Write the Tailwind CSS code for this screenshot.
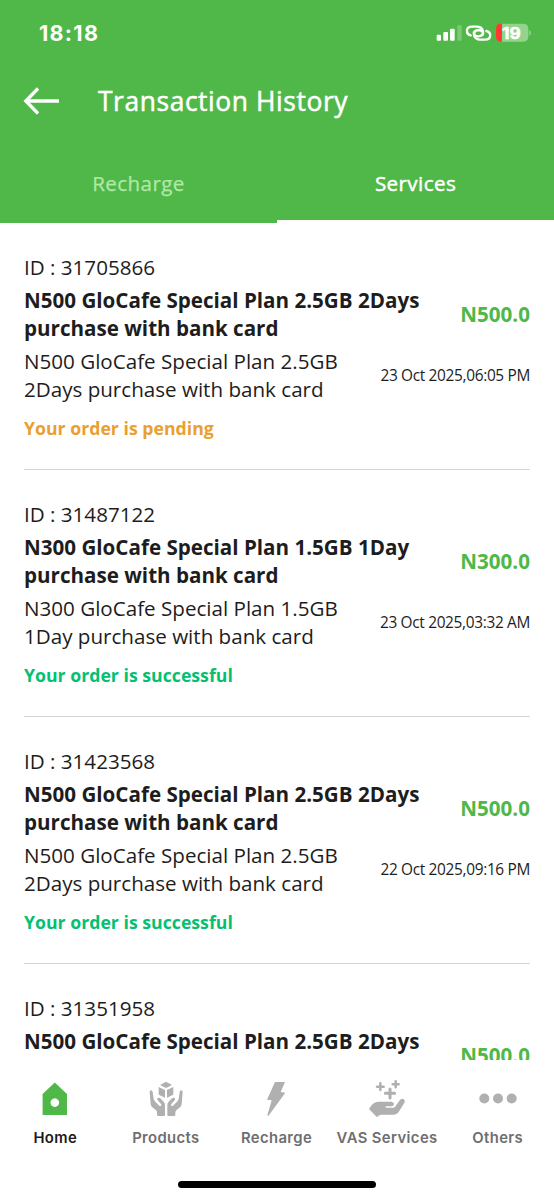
<!DOCTYPE html>
<html lang="en">
<head>
<meta charset="utf-8">
<title>Transaction History</title>
<script src="https://cdn.jsdelivr.net/npm/@tailwindcss/browser@4"></script>
</head>
<body class="bg-white">
<div class="w-[554px] h-[1200px] flex flex-col overflow-hidden bg-white font-['Open_Sans',sans-serif] text-[#1d1d1d]">
  <header class="h-[223px] shrink-0 bg-[#50b848] text-white flex flex-col">
    <div class="h-[66px] flex items-center justify-between pl-[39px] pr-[23px] font-['Inter',sans-serif]">
      <span class="text-[21.5px] font-bold leading-none tracking-[1.3px] pt-px">18:18</span>
      <svg class="w-[95px] h-[20px]" viewBox="48 40 285 60" fill="#fff">
        <rect x="50" y="75" width="13" height="18" rx="3"/>
        <rect x="70" y="67" width="14" height="26" rx="3"/>
        <rect x="90" y="57" width="14" height="36" rx="3"/>
        <rect x="112" y="47" width="13" height="46" rx="3" opacity=".25"/>
        <g fill="none" stroke="#fff" stroke-width="7" stroke-linecap="round">
          <path d="M152 77C137 73 136 51 156 51H170C191 51 198 78 176 80C162 80 158 68 166 64"/>
          <path d="M199 64C215 68 215 90 195 90H181C160 90 153 63 175 61C189 61 193 73 185 77"/>
        </g>
        <path d="M244 42H309Q325 42 325 58V80Q325 96 309 96H244Z" opacity=".38"/>
        <path d="M246 42H241Q228 42 228 58V80Q228 96 241 96H246Z" fill="#ff3b30"/>
        <path d="M328 62Q333 64 333 70T328 78Z" opacity=".4"/>
        <text x="274" y="87" text-anchor="middle" font-family="Inter" font-weight="700" font-size="46" stroke="#fff" stroke-width="1.5" textLength="56" lengthAdjust="spacingAndGlyphs">19</text>
      </svg>
    </div>
    <div class="h-[70px] flex items-center pl-[23px]">
      <svg class="w-[37px] h-[28px] mr-[38px]" viewBox="0 0 37 28" fill="none" stroke="#fff" stroke-width="3.3"><path d="M36 14H3M15 1.5L2.800 14L15 26.500"/></svg>
      <h1 class="text-[26.4px] leading-[35px] pt-px tracking-[0.58px] [-webkit-text-stroke:0.5px_#fff] whitespace-nowrap">Transaction History</h1>
    </div>
    <div class="flex-1 grid grid-cols-2 text-[20.6px] leading-[28px] tracking-[0.4px] text-center">
      <div class="pt-[33px] text-[#b1e8a6] [-webkit-text-stroke:0.25px_#b1e8a6]">Recharge</div>
      <div class="pt-[33px] [-webkit-text-stroke:0.45px_#fff] border-b-[3px] border-white">Services</div>
    </div>
  </header>

  <main class="h-[837px] shrink-0 overflow-hidden px-[24px] text-[20.6px] leading-[28px]">
    <article class="h-[247px] pt-[30px] flex flex-col border-b-[1.5px] border-[#d4d4d4]">
      <p>ID : 31705866</p>
      <div class="mt-[5px] flex justify-between items-center font-bold"><p>N500 GloCafe Special Plan 2.5GB 2Days<br>purchase with bank card</p><span class="text-[#50b848]">N500.0</span></div>
      <div class="mt-[5px] flex justify-between items-center"><p>N500 GloCafe Special Plan 2.5GB<br>2Days purchase with bank card</p><span class="pt-px text-[15.4px] tracking-[-0.32px]">23 Oct 2025,06:05 PM</span></div>
      <p class="mt-[13px] text-[17.7px] leading-[25px] font-bold text-[#eaa02f]">Your order is pending</p>
    </article>
    <article class="h-[247px] pt-[30px] flex flex-col border-b-[1.5px] border-[#d4d4d4]">
      <p>ID : 31487122</p>
      <div class="mt-[5px] flex justify-between items-center font-bold"><p>N300 GloCafe Special Plan 1.5GB 1Day<br>purchase with bank card</p><span class="text-[#50b848]">N300.0</span></div>
      <div class="mt-[5px] flex justify-between items-center"><p>N300 GloCafe Special Plan 1.5GB<br>1Day purchase with bank card</p><span class="pt-px text-[15.4px] tracking-[-0.32px]">23 Oct 2025,03:32 AM</span></div>
      <p class="mt-[13px] text-[17.7px] leading-[25px] font-bold text-[#05c072]">Your order is successful</p>
    </article>
    <article class="h-[247px] pt-[30px] flex flex-col border-b-[1.5px] border-[#d4d4d4]">
      <p>ID : 31423568</p>
      <div class="mt-[5px] flex justify-between items-center font-bold"><p>N500 GloCafe Special Plan 2.5GB 2Days<br>purchase with bank card</p><span class="text-[#50b848]">N500.0</span></div>
      <div class="mt-[5px] flex justify-between items-center"><p>N500 GloCafe Special Plan 2.5GB<br>2Days purchase with bank card</p><span class="pt-px text-[15.4px] tracking-[-0.32px]">22 Oct 2025,09:16 PM</span></div>
      <p class="mt-[13px] text-[17.7px] leading-[25px] font-bold text-[#05c072]">Your order is successful</p>
    </article>
    <article class="pt-[30px] flex flex-col">
      <p>ID : 31351958</p>
      <div class="mt-[5px] h-[56px] flex justify-between items-center font-bold"><p class="self-start">N500 GloCafe Special Plan 2.5GB 2Days</p><span class="text-[#50b848]">N500.0</span></div>
    </article>
  </main>

  <nav class="flex-1 flex flex-col items-center bg-white font-['Inter',sans-serif]">
    <div class="w-[553px] self-start grid grid-cols-5 pt-[20px] text-[14.8px] leading-[20px] font-semibold tracking-[0.4px] text-[#6e6e70] text-center whitespace-nowrap">
      <div class="flex flex-col items-center gap-[11px] text-[#1a1a1a]">
        <svg class="w-[40px] h-[37px]" viewBox="0 0 40 37" fill="#50b848"><path fill-rule="evenodd" d="M19.800 2.500L32 14V35H7.600V14ZM19.800 18.300a4.300 4.300 0 1 0 .01 0Z"/></svg>
        <span>Home</span>
      </div>
      <div class="flex flex-col items-center gap-[11px]">
        <svg class="w-[40px] h-[37px]" viewBox="46 30 120 111" fill="#b0b0b0">
          <path d="M106 35L124 45L106 54L88 45Z"/>
          <path d="M84 51L103 60V83L86 75Q84 74 84 71Z"/>
          <path d="M128 51L109 60V83L126 75Q128 74 128 71Z"/>
          <path id="hand" d="M57 66Q57 61 61 61Q65 61 66 66L69 87Q70 91 74 95L86 107Q89 109 91 107Q93 105 91 102L81 91Q78 87 81 84Q85 82 89 85L99 95Q103 99 103 105V134Q103 138 99 138H83Q79 138 79 134V127Q79 124 76 121L64 111Q61 108 60 103Z"/>
          <use href="#hand" transform="matrix(-1 0 0 1 213 0)"/>
        </svg>
        <span>Products</span>
      </div>
      <div class="flex flex-col items-center gap-[11px]">
        <svg class="w-[40px] h-[37px]" viewBox="48 30 120 111" fill="#b0b0b0"><path d="M105 36H135L122 66L136 68L85 138L82 136L95 91L81 89Z"/></svg>
        <span>Recharge</span>
      </div>
      <div class="flex flex-col items-center gap-[11px]">
        <svg class="w-[40px] h-[37px]" viewBox="52 30 120 111" fill="#b0b0b0">
          <path fill="none" stroke="#b0b0b0" stroke-width="7.5" stroke-linecap="round" d="M82 50H102M92 40V60M129 43H147M138 34V52"/>
          <path fill="none" stroke="#b0b0b0" stroke-width="9" stroke-linecap="round" d="M107 70H135M121 57V84"/>
          <path d="M58 117Q66 102 78 97Q81 95 86 95H125Q133 96 133 103Q132 109 125 109H108V113H132Q136 112 138 108L149 92Q154 85 161 87Q168 91 164 98L147 126Q142 134 132 134H95Q89 134 85 139Q82 142 79 139Z"/>
        </svg>
        <span>VAS Services</span>
      </div>
      <div class="flex flex-col items-center gap-[11px]">
        <svg class="w-[40px] h-[37px]" viewBox="0 0 40 37" fill="#b0b0b0"><circle cx="6.300" cy="18.500" r="5"/><circle cx="20" cy="18.500" r="5"/><circle cx="33.700" cy="18.500" r="5"/></svg>
        <span>Others</span>
      </div>
    </div>
    <div class="mt-[33px] w-[198px] h-[7px] rounded-full bg-black"></div>
  </nav>
</div>
</body>
</html>
